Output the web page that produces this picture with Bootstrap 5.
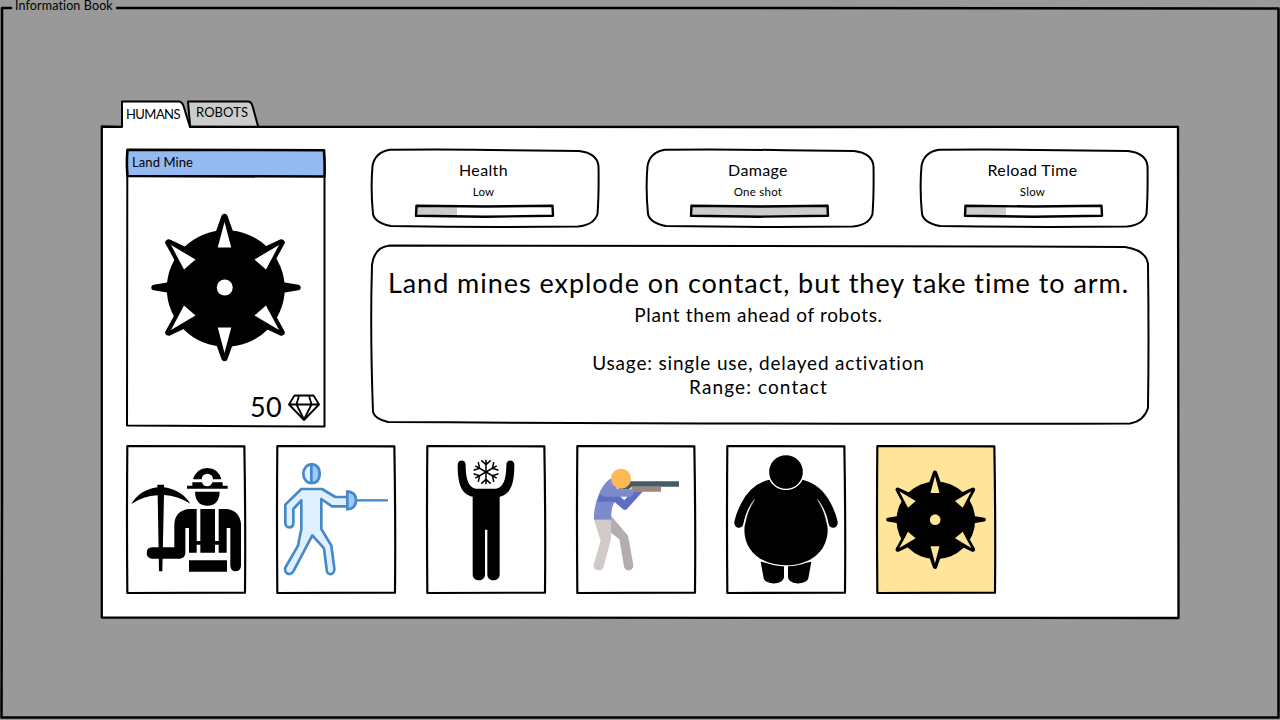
<!DOCTYPE html>
<html lang="en">
<head>
<meta charset="utf-8">
<meta name="viewport" content="width=device-width, initial-scale=1">
<title>Information Book</title>
<link href="https://cdn.jsdelivr.net/npm/bootstrap@5.3.0/dist/css/bootstrap.min.css" rel="stylesheet">
<style>
  body { background:#999; color:#000; font-family:Lato,"Liberation Sans",sans-serif; width:1280px; height:720px; overflow:hidden; line-height:1.2; }
  .book { height:720px; padding-top:101px; }
  .book-title { left:15px; top:-2px; font-size:12.5px; line-height:16px; letter-spacing:.13px; white-space:nowrap; }
  .frame { position:absolute; inset:0; width:100%; height:100%; fill:none; stroke:#000; stroke-width:2; stroke-linejoin:round; stroke-linecap:round; overflow:visible; pointer-events:none; }
  .tabs { margin-left:121px; height:26px; font-size:13px; }
  .tabs .tab { height:26px; line-height:27px; white-space:nowrap; }
  .tab-on { width:66px; padding-left:5px; letter-spacing:-.56px; z-index:1; }
  .tab-off { width:72px; padding-left:9px; letter-spacing:.08px; line-height:23px !important; }
  .tab span { position:relative; }
  .page { margin-left:101px; width:1078px; height:492px; margin-top:-1px; background:#fff; padding:23px 29px 24px 25px; }
  .info { width:200px; height:278px; }
  .info-head { height:28px; margin:0 1px; background:#94baf1; font-size:13px; line-height:27px; padding-left:5px; letter-spacing:.09px; }
  .info-foot { height:38px; font-size:27px; letter-spacing:.4px; padding:0 6px 2px 0; gap:6px; }
  .right-col { width:778px; margin-left:45px; }
  .stat { width:229px; height:80px; padding:11px 4px 0 0; }
  .stat-name { font-size:16px; line-height:20px; letter-spacing:.35px; }
  .stat-value { font-size:11.5px; line-height:14px; letter-spacing:.25px; margin-top:5px; }
  .meter { width:139px; height:12px; margin-top:6px; background:#fff; left:1px; }
  .meter-fill { height:12px; background:#ccc; }
  .about { height:181px; margin-top:16px; padding:21px 3px 0 0; font-size:19px; line-height:24px; letter-spacing:.82px; white-space:nowrap; }
  .about-lead { font-size:27px; line-height:34px; letter-spacing:.96px; margin-bottom:3px; }
  .thumbs { gap:30px; margin-top:18px; }
  .thumb { width:120px; height:149px; padding:0; --paper:#fff; background:none; border:0; display:block; line-height:0; }
  .thumb.on { --paper:#ffe599; }
  .thumb svg { width:120px; height:149px; display:block; overflow:visible; }
  .mine { --paper:#fff; }
</style>
</head>
<body>
<svg width="0" height="0" class="position-absolute">
  <defs>
    <g id="spike-up"><path d="M195 99L184 130H206Z" fill="#000" stroke="#000" stroke-width="13" stroke-linejoin="round"/><path d="M195 109L181.500 160H208.500Z" fill="var(--paper)"/></g>
    <g id="spike-diag"><path d="M309 150L275 166L288 188Z" fill="#000" stroke="#000" stroke-width="13" stroke-linejoin="round"/><path d="M304 155L255 184L278 204Z" fill="var(--paper)"/></g>
    <g id="mine">
      <ellipse cx="197.500" cy="242" rx="118" ry="116.500"/>
      <path d="M54 240L90 234V246ZM342 240L306 234V246Z" stroke="#000" stroke-width="11" stroke-linejoin="round"/>
      <use href="#spike-up"/><use href="#spike-up" transform="matrix(1 0 0 -1 0 480)"/>
      <use href="#spike-diag"/><use href="#spike-diag" transform="matrix(-1 0 0 1 392 0)"/>
      <use href="#spike-diag" transform="matrix(1 0 0 -1 0 480)"/><use href="#spike-diag" transform="matrix(-1 0 0 -1 392 480)"/>
      <circle cx="195.500" cy="240" r="16" fill="var(--paper)"/>
    </g>
    <g id="card-frame">
      <path d="M22 19L373 20Q377 240 375 459L22 460Q20 240 22 19Z" fill="var(--paper)" stroke="#000" stroke-width="6.500" stroke-linejoin="round"/>
    </g>
    <g id="stat-frame"><path d="M19 .8Q80 .2 140 1.200L208 2Q226 4 227.500 17Q228 45 226.500 65Q223 76 207 77.500Q110 78.500 20 77Q4 74 2 65Q-.5 40 1.500 17Q4 3 19 .8Z"/></g>
  </defs>
</svg>

<main class="book position-relative">
  <svg class="frame" viewBox="0 0 1280 720" style="stroke-width:2.5"><path d="M11 8L2 8Q1 300 2 500L1.500 717.500Q700 718.500 1278.500 717.500Q1279.500 300 1278.500 8.500L700 8L117 8"/></svg>
  <div class="book-title position-absolute">Information Book</div>

  <nav class="tabs d-flex">
    <div class="tab tab-on position-relative">
      <svg class="frame" viewBox="0 0 66 26"><path d="M1 26V.6L58 .4Q61 .6 62.500 5L69 26" fill="#fff"/></svg>
      <span>HUMANS</span>
    </div>
    <div class="tab tab-off position-relative">
      <svg class="frame" viewBox="0 0 72 26"><path d="M3 24L1 .6H61Q64 .6 65.500 5L71 25" fill="#ccc"/></svg>
      <span>ROBOTS</span>
    </div>
  </nav>

  <section class="page position-relative">
    <svg class="frame" viewBox="0 0 1078 492"><path d="M20 .8L.8 .5Q0 250 .8 491.500Q500 493 1077.500 492Q1078 200 1077 .8L700 1L89 .8" stroke-width="2.300"/></svg>
    <div class="d-flex">
      <article class="info mine position-relative d-flex flex-column">
        <div class="info-head">Land Mine</div>
        <svg class="d-block overflow-visible" style="margin:36px 0 0 25px" width="149" height="149" viewBox="48 91 298 298"><use href="#mine"/></svg>
        <div class="info-foot d-flex align-items-center justify-content-end mt-auto">
          <span>50</span>
          <svg width="32" height="27" viewBox="0 0 32 27" fill="none" stroke="#000" stroke-width="1.800" stroke-linejoin="round"><path d="M6.500 1.500H25.500L31 10.500L16 26L1 10.500ZM1 10.500H31M11 1.500L8.500 10.500L16 25.500L23.500 10.500L21 1.500"/></svg>
        </div>
        <svg class="frame" viewBox="0 0 200 278"><path d="M1.500 .8L198 1.200Q199 15 198.500 27.500L1.500 27Q.3 14 1.500 .8Z" stroke-width="2.600"/><path d="M1.300 27L1 276.500L198.500 277.500L198.500 28"/></svg>
      </article>

      <div class="right-col">
        <div class="d-flex justify-content-between">
          <div class="stat position-relative text-center">
            <svg class="frame" viewBox="0 0 229 80"><use href="#stat-frame"/></svg>
            <div class="stat-name">Health</div>
            <div class="stat-value">Low</div>
            <div class="meter position-relative mx-auto"><div class="meter-fill" style="width:30%"></div>
              <svg class="frame" viewBox="0 0 139 12" style="stroke-width:2.4"><path d="M1.500 .8L70 1.500L137.500 .8L138 10.800L70 11.700L1 10.800Z"/></svg></div>
          </div>
          <div class="stat position-relative text-center">
            <svg class="frame" viewBox="0 0 229 80"><use href="#stat-frame"/></svg>
            <div class="stat-name">Damage</div>
            <div class="stat-value">One shot</div>
            <div class="meter position-relative mx-auto"><div class="meter-fill" style="width:100%"></div>
              <svg class="frame" viewBox="0 0 139 12" style="stroke-width:2.4"><path d="M1.500 .8L70 1.500L137.500 .8L138 10.800L70 11.700L1 10.800Z"/></svg></div>
          </div>
          <div class="stat position-relative text-center">
            <svg class="frame" viewBox="0 0 229 80"><use href="#stat-frame"/></svg>
            <div class="stat-name">Reload Time</div>
            <div class="stat-value">Slow</div>
            <div class="meter position-relative mx-auto"><div class="meter-fill" style="width:30%"></div>
              <svg class="frame" viewBox="0 0 139 12" style="stroke-width:2.4"><path d="M1.500 .8L70 1.500L137.500 .8L138 10.800L70 11.700L1 10.800Z"/></svg></div>
          </div>
        </div>
        <div class="about position-relative text-center">
          <svg class="frame" viewBox="371 245 778 181"><path d="M390 245.500Q760 245 1000 246.500L1125 247Q1146 250 1148 264Q1149 340 1148 408Q1144 421 1130 423.500Q800 424.500 388 422Q375 419 373 412Q370 330 372 265Q374 247 390 245.500Z"/></svg>
          <div class="about-lead">Land mines explode on contact, but they take time to arm.</div>
          <div style="letter-spacing:.68px">Plant them ahead of robots.</div>
          <br>
          <div>Usage: single use, delayed activation</div>
          <div style="letter-spacing:1.1px">Range: contact</div>
        </div>
      </div>
    </div>

    <div class="thumbs d-flex">
      <button class="thumb" aria-label="Miner"><svg viewBox="18 16 360 447"><use href="#card-frame"/>
        <path d="M34 193Q60 150 112 143V135H132V143Q184 150 211 192Q172 168 132 166L127 395H117L113 167Q70 169 34 193Z"/>
        <path d="M201 147V138H217V128H246A16 16 0 0 0 277 128H308V138H323V147ZM219 119Q229 86 262 85Q295 86 304 119H279A17 17 0 0 0 245 119Z"/>
        <path d="M225 156H299Q298 197 262 198Q226 197 225 156Z"/>
        <path d="M230 208H207Q164 213 163 256V323H97Q80 324 80 340Q80 356 97 357H180Q195 356 196 341V265H207V339H230V315H241V339H285V315H296V339H320V265H331V380Q333 395 346 395Q362 395 363 378V252Q358 212 320 208H296V304H285V208H241V304H230Z"/>
        <path d="M207 362H321V396H207Z"/></svg></button>

      <button class="thumb" aria-label="Fencer"><svg viewBox="18 16 360 447"><use href="#card-frame"/>
        <g fill="#dff0fe" stroke="#4788c7" stroke-width="8" stroke-linejoin="round">
        <path d="M94 148H156L196 172H232V200H186L154 178V268L184 318L193 386C195 408 170 409 170 390L162 326L127 287L70 395C59 413 39 397 47 382L84 318L94 268V182L70 208V251C69 267 46 267 46 251V195Z"/>
        <ellipse cx="124" cy="102" rx="24" ry="28"/><path d="M124 74Q149 75 149 102Q149 130 124 130Z" fill="#98ccfd"/>
        <path d="M232 155Q258 157 258 182Q258 207 232 209Z" fill="#98ccfd"/><path d="M258 182H354" stroke-width="7"/></g></svg></button>

      <button class="thumb" aria-label="Freezer"><svg viewBox="18 16 360 447"><use href="#card-frame"/>
        <path d="M113 75C113 58 137 58 137 75C137 118 146 147 172 147H224C250 147 259 118 259 75C259 58 283 58 283 75C283 131 273 163 239 171V404C239 428 202 428 202 404V270H195V404C195 428 158 428 158 404V171C123 163 113 131 113 75Z"/>
        <g fill="none" stroke="#000" stroke-width="4.500"><g id="flake-arm"><path d="M198 97V60M184 62L198 75L212 62"/></g><use href="#flake-arm" transform="rotate(60 198 97)"/><use href="#flake-arm" transform="rotate(120 198 97)"/><use href="#flake-arm" transform="rotate(180 198 97)"/><use href="#flake-arm" transform="rotate(240 198 97)"/><use href="#flake-arm" transform="rotate(300 198 97)"/></g></svg></button>

      <button class="thumb" aria-label="Shooter"><svg viewBox="18 16 360 447"><use href="#card-frame"/>
        <path d="M123 228L174 288L190 376C191 397 163 397 162 380L148 299L123 279Z" fill="#b3adad"/>
        <path d="M72 240H123V298L101 381C96 399 66 394 71 374L92 303Z" fill="#d0cbc9"/>
        <path d="M128 114Q106 121 88 160Q71 198 72 240H123Q123 207 131 192L148 165Z" fill="#7d8ace"/>
        <path d="M90 165Q82 175 86 186H133L161 210H169L219 155H188L163 182L150 170Z" fill="#5e6cc2"/>
        <path d="M98 149H185Q190 151 190 159Q190 168 180 171H104Q91 169 91 158Q91 151 98 149Z" fill="#7d8ace"/>
        <path d="M180 125H327V141H186L176 149H142Z" fill="#455b65"/>
        <path d="M187 141H273V156H190Q189 152 183 149Z" fill="#9f8580"/>
        <circle cx="153" cy="117" r="30" fill="#feb957"/></svg></button>

      <button class="thumb" aria-label="Big guy"><svg viewBox="18 16 360 447"><use href="#card-frame"/>
        <path d="M122 366L131 416C136 436 190 438 192 412V379ZM274 366L265 416C260 436 206 438 204 412V379Z"/>
        <path d="M148 120Q92 134 63 192Q47 224 43 246C41 267 66 271 70 253Q77 212 103 178Q73 225 73 273C75 337 126 376 198 377C270 376 321 337 323 273Q323 225 293 178Q319 212 326 253C330 271 355 267 353 246Q349 224 333 192Q304 134 248 120Q233 149 198 150Q163 149 148 120Z" stroke="#fff" stroke-width="7" paint-order="stroke"/>
        <path d="M71 258Q78 212 104 179Q80 216 74 256ZM325 258Q318 212 292 179Q316 216 322 256Z" fill="#fff" stroke="#fff"/>
        <circle cx="198" cy="97" r="50.500" stroke="#fff" stroke-width="7" paint-order="stroke"/></svg></button>

      <button class="thumb on" aria-label="Land Mine"><svg viewBox="18 16 360 447"><use href="#card-frame"/><use href="#mine"/></svg></button>
    </div>
  </section>
</main>
<script src="https://cdn.jsdelivr.net/npm/bootstrap@5.3.0/dist/js/bootstrap.bundle.min.js"></script>
</body>
</html>
